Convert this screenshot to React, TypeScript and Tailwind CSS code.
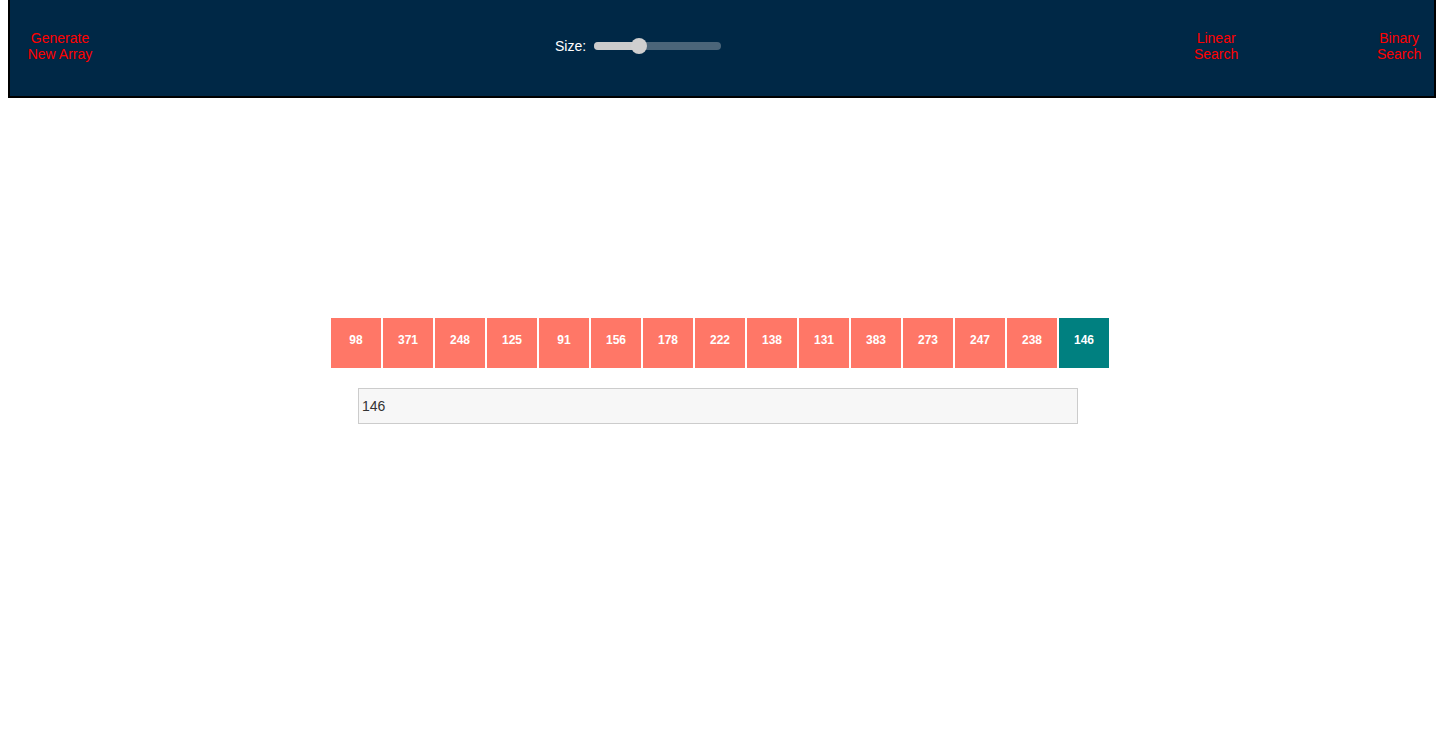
const values = [98, 371, 248, 125, 91, 156, 178, 222, 138, 131, 383, 273, 247, 238, 146];
const target = 146;

const App = () => {
  return (
    <div className="min-h-[735px] bg-white font-['Liberation_Sans',Arial,sans-serif]">
      {/* Navbar */}
      <div className="pl-2 pr-1">
        <nav className="h-[98px] bg-[#002846] border-2 border-t-0 border-black flex items-center pb-[4px] text-[14px] leading-[16px]">
          <button className="shrink-0 w-[100px] text-[#ff0000] text-center">
            Generate
            <br />
            New Array
          </button>
          <div className="shrink-0 ml-[445px] flex items-center">
            <span className="text-white">Size:</span>
            <div className="relative ml-[8px] w-[127px] h-[8px] rounded-full bg-[#4b6579]">
              <div className="w-[45px] h-[8px] rounded-full bg-[#cccccc]" />
              <div className="absolute left-[37px] top-[-4px] w-4 h-4 rounded-full bg-[#cfcfcf]" />
            </div>
          </div>
          <button className="shrink-0 ml-[445px] w-[100px] text-[#ff0000] text-center">
            Linear
            <br />
            Search
          </button>
          <button className="shrink-0 ml-[103px] w-[60px] text-[#ff0000] text-center">
            Binary
            <br />
            Search
          </button>
        </nav>
      </div>

      {/* Array */}
      <div className="mt-[220px] flex justify-center gap-[2px]">
        {values.map((v, i) => (
          <div
            key={i}
            className={
              v === target && i === values.length - 1
                ? "w-[50px] h-[50px] flex items-center justify-center pb-[6px] bg-[#008080] text-white text-[12px] font-bold"
                : "w-[50px] h-[50px] flex items-center justify-center pb-[6px] bg-[#ff7767] text-white text-[12px] font-bold"
            }
          >
            {v}
          </div>
        ))}
      </div>

      <div className="mt-[20px] ml-[358px]">
        <input
          defaultValue="146"
          className="w-[720px] h-[36px] bg-[#f7f7f7] border border-[#cccccc] px-[3px] text-[14px] text-[#333333] outline-none"
        />
      </div>
    </div>
  );
};

export default App;
